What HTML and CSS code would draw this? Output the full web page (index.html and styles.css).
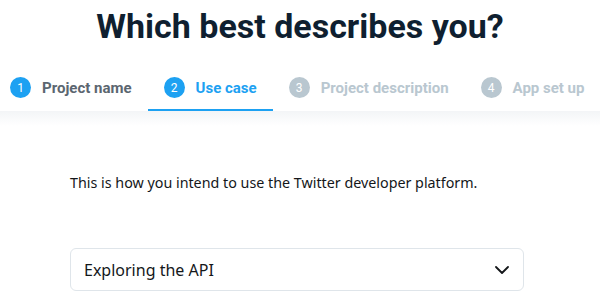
FILE: index.html
```html
<!DOCTYPE html>
<html>
<head>
  <title>Use case</title>
  <meta charset="UTF-8">
  <meta name="viewport" content="width=device-width,initial-scale=1">
  <link rel="stylesheet" href="styles.css">
</head>
<body>
  <div class="wrapper">
    <h1 class="title">Which best describes you?</h1>

    <nav class="steps">
      <div class="step done"><span class="num">1</span><span class="label">Project name</span></div>
      <div class="step active"><span class="num">2</span><span class="label">Use case</span></div>
      <div class="step"><span class="num">3</span><span class="label">Project description</span></div>
      <div class="step"><span class="num">4</span><span class="label">App set up</span></div>
    </nav>

    <main class="content">
      <p class="intro">This is how you intend to use the Twitter developer platform.</p>
      <div class="select">
        <span>Exploring the API</span>
        <svg class="chevron" width="14" height="8" viewBox="0 0 14 8"><path d="M1 1l6 6 6-6" fill="none" stroke="#14171a" stroke-width="1.8" stroke-linecap="round" stroke-linejoin="round"/></svg>
      </div>
    </main>
  </div>
</body>
</html>
```

FILE: styles.css
```css
*, *:before, *:after {
  box-sizing: border-box;
}

html, body {
  width: 100%;
  height: 100%;
}

body {
  margin: 0;
  background: #fff;
  overflow: hidden;
  font-family: Roboto, "Liberation Sans", sans-serif;
  color: #14171a;
}

.title {
  margin: 0;
  padding-top: 5px;
  text-align: center;
  font-size: 34px;
  font-weight: 700;
  line-height: 42px;
  color: #0f1f30;
}

.steps {
  display: flex;
  margin: 21px 0 0 -6px;
  height: 43px;
  white-space: nowrap;
}

.step {
  display: flex;
  align-items: center;
  gap: 11px;
  padding: 0 16px 4px;
  font-size: 15px;
  font-weight: 700;
  color: #b9c7d0;
}

.step .num {
  display: flex;
  align-items: center;
  justify-content: center;
  width: 21px;
  height: 21px;
  border-radius: 50%;
  background: #b9c7d0;
  color: #fff;
  font-size: 12px;
  font-weight: 400;
}

.step.done {
  color: #5b6670;
}

.step.done .num,
.step.active .num {
  background: #1da1f2;
}

.step.active {
  color: #1da1f2;
  border-bottom: 2px solid #1da1f2;
  padding-bottom: 2px;
}

.content {
  padding: 60px 70px 0 70px;
  background: linear-gradient(#f3f5f7, #fff 15px);
  font-family: "Noto Sans", sans-serif;
}

.intro {
  margin: 0;
  font-size: 14.3px;
  line-height: 24px;
}

.select {
  display: flex;
  align-items: center;
  justify-content: space-between;
  width: 454px;
  height: 43px;
  margin-top: 53px;
  padding: 0 14px 0 13px;
  border: 1px solid #dfe5ea;
  border-radius: 6px;
  font-size: 16px;
}
```
